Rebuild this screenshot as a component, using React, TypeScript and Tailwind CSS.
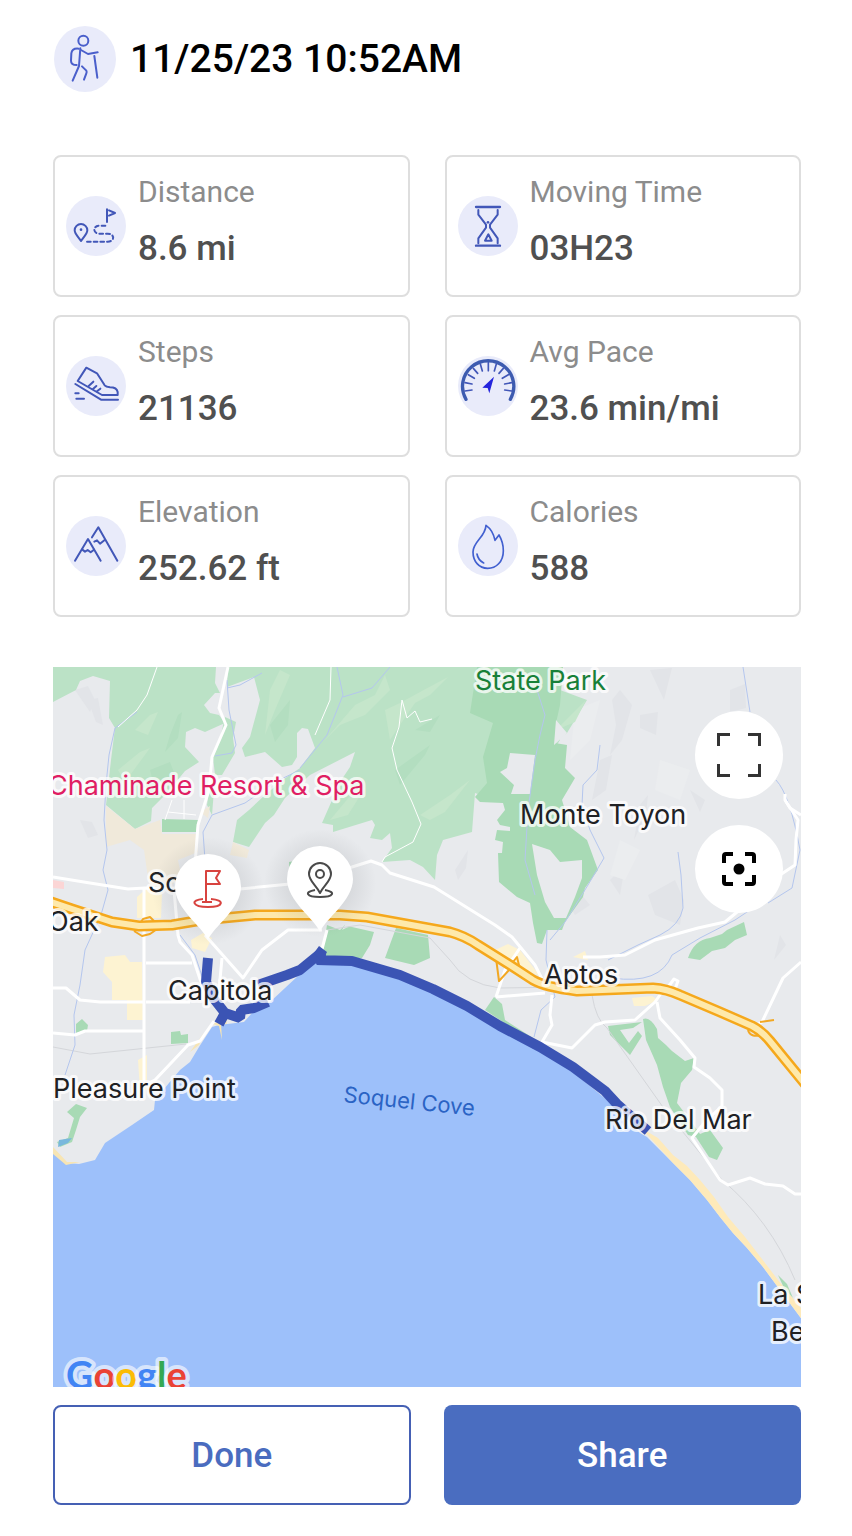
import React from 'react';

interface Stat {
  label: string;
  value: string;
  icon: React.ReactNode;
}

const iconProps = {
  viewBox: '0 0 180 180',
  fill: 'none',
  stroke: '#4257b8',
  strokeWidth: 6,
  strokeLinecap: 'round' as const,
  strokeLinejoin: 'round' as const,
  className: 'w-full h-full',
  'aria-hidden': true,
};

function HikerIcon() {
  return (
    <svg {...iconProps} viewBox="0 0 186 198" stroke="#4a5fcb">
      <circle cx="88" cy="44" r="15" />
      <path d="M74 68Q54 66 52 82L51 104Q51 117 68 117" />
      <path d="M79 67L75 120L56 164" />
      <path d="M81 72L102 84L131 79" />
      <path d="M121 90L130 155" />
      <path d="M84 121L97 134Q99 138 97 142L90 161" />
    </svg>
  );
}

function RouteIcon() {
  return (
    <svg {...iconProps}>
      <path d="M45 135C38 124 26 114 26 103A19 19 0 0 1 64 103C64 114 52 124 45 135Z" />
      <circle cx="45" cy="101" r="4" fill="#4257b8" stroke="none" />
      <path d="M123 40V78M129 43L147 51L129 59" />
      <path d="M118 89H100C80 89 80 113 100 113H125C147 113 147 137 125 137H57" strokeDasharray="11 9" />
    </svg>
  );
}

function HourglassIcon() {
  return (
    <svg {...iconProps}>
      <path d="M54 33H126M54 149H126" strokeWidth="7" />
      <path d="M61 42V56L84 86V95L61 127V142" />
      <path d="M119 42V56L96 86V95L119 127V142" />
      <circle cx="90" cy="79" r="4" fill="#4257b8" stroke="none" />
      <path d="M91 115L81 134H101Z" />
    </svg>
  );
}

function ShoeIcon() {
  return (
    <svg {...iconProps}>
      <path d="M61 35L93 52L116 88Q120 93 132 94Q152 94 155 108V117H108L35 75Z" />
      <path d="M28 84L105 131H156" />
      <path d="M68 90L82 77M81 99L91 90M93 106L103 98" />
      <path d="M28 112H38M31 128H54" />
    </svg>
  );
}

function GaugeIcon() {
  return (
    <svg {...iconProps}>
      <path d="M24 130A77 77 0 1 1 157 130" strokeWidth="10" stroke="#3d5bb0" />
      <path
        strokeWidth="5"
        d="M21 105L42 102M21 80L42 84M31 56L49 67M46 37L59 52M67 24L73 45M91 20V44M115 24L109 45M136 37L123 52M151 56L133 67M161 80L140 84M161 105L140 102"
      />
      <path d="M108 62L73 95L89 96L94 112Z" fill="#2424dd" stroke="none" />
    </svg>
  );
}

function MountainIcon() {
  return (
    <svg {...iconProps}>
      <path d="M78 64L97 34L154 134" />
      <path d="M85 77L93 73L102 83L116 72" />
      <path d="M27 134L66 69L104 134" />
      <path d="M49 101L57 107L65 102L74 109L84 101" />
    </svg>
  );
}

function FlameIcon() {
  return (
    <svg {...iconProps} stroke="#4260d0" strokeWidth="5">
      <path d="M84 28C97 37 107 53 111 73L123 57C132 72 136 88 136 104C136 138 114 157 89 157C63 157 45 136 45 108C45 76 82 64 84 28Z" />
      <path d="M57 114Q60 132 77 141" />
    </svg>
  );
}

const stats: Stat[] = [
  { label: 'Distance', value: '8.6 mi', icon: <RouteIcon /> },
  { label: 'Moving Time', value: '03H23', icon: <HourglassIcon /> },
  { label: 'Steps', value: '21136', icon: <ShoeIcon /> },
  { label: 'Avg Pace', value: '23.6 min/mi', icon: <GaugeIcon /> },
  { label: 'Elevation', value: '252.62 ft', icon: <MountainIcon /> },
  { label: 'Calories', value: '588', icon: <FlameIcon /> },
];

function StatCard({ label, value, icon }: Stat) {
  return (
    <div className="flex items-center gap-3 rounded-lg border-2 border-[#dedede] py-1.5 pl-[11px]">
      <div className="h-[60px] w-[60px] shrink-0 rounded-full bg-[#e9ebfa]">{icon}</div>
      <dl className="pb-3 leading-[57px] whitespace-nowrap">
        <dt className="text-[30px] text-[#8c8c8c]">{label}</dt>
        <dd className="text-[35px] font-medium text-[#505050]">{value}</dd>
      </dl>
    </div>
  );
}

const HIGHWAY =
  'M45 900L72 909L112 922L139 926L172 925L202 920L255 915H340L367 917L450 932Q465 936 478 945L510 965L533 980Q545 987 577 991L653 988Q667 989 680 995L720 1012L752 1026Q762 1031 770 1041L806 1085';

const COAST =
  'L67 1163L79 1164L95 1160L105 1143L132 1125L154 1110L155 1100L169 1083L180 1070L190 1062L199 1047L212 1027L219 1025L244 1022L252 1013L269 1003L285 988L299 975L315 963L352 965L400 977L467 1006L533 1045L573 1072L607 1100L640 1133L647 1137L673 1163L690 1180L707 1200L720 1217L733 1233L747 1248L763 1267L780 1290L806 1325';

const labels = [
  { text: 'State Park', x: 475, y: 690, color: '#188038' },
  { text: 'Chaminade Resort & Spa', x: 48, y: 795, color: '#e01e63' },
  { text: 'Monte Toyon', x: 520, y: 824, color: '#202124' },
  { text: 'Soquel', x: 148, y: 892, color: '#202124' },
  { text: 'Oak', x: 48, y: 931, color: '#202124' },
  { text: 'Aptos', x: 544, y: 984, color: '#202124' },
  { text: 'Capitola', x: 168, y: 1000, color: '#202124' },
  { text: 'Pleasure Point', x: 53, y: 1098, color: '#202124' },
  { text: 'Rio Del Mar', x: 605, y: 1129, color: '#202124' },
  { text: 'La Selva', x: 758, y: 1304, color: '#202124' },
  { text: 'Beach', x: 771, y: 1341, color: '#202124' },
];

function Pin({ x, y, children }: { x: number; y: number; children: React.ReactNode }) {
  return (
    <g transform={`translate(${x} ${y})`}>
      <ellipse cx="0" cy="4" rx="56" ry="54" fill="url(#pinShade)" />
      <path d="M0 53C-5 40-33 22-33 0A33 33 0 1 1 33 0C33 22 5 40 0 53Z" fill="#fff" />
      <g fill="none" strokeWidth="2" strokeLinejoin="round">{children}</g>
    </g>
  );
}

function RouteMap() {
  return (
    <svg viewBox="53 667 748 720" className="block h-auto w-full" role="img" aria-label="Map of the route">
      <defs>
        <radialGradient id="pinShade">
          <stop offset="0.4" stopColor="#5f6368" stopOpacity="0.16" />
          <stop offset="1" stopColor="#5f6368" stopOpacity="0" />
        </radialGradient>
      </defs>
      <rect x="53" y="667" width="748" height="720" fill="#e8eaed" />

      {/* terrain shading */}
      <g fill="#e2e4e8">
        <path d="M75 690L88 686L95 700L90 712ZM88 700L98 698L103 725L96 722ZM80 820L92 822L98 835L88 838Z" />
        <path d="M612 700L620 690L632 705L622 740L610 755L616 725ZM640 715L658 712L656 735L640 728ZM600 760L612 755L606 790L592 800ZM640 805L648 795L646 815L634 840Z" />
        <path d="M648 895L675 880L684 900L680 925L655 915ZM730 690L745 684L746 708L730 712ZM455 870L468 850L466 868L458 880ZM690 790L705 800L700 812Z" />
        <path d="M566 900L580 893L590 905L575 915ZM610 880L625 865L620 895ZM650 670L672 668L664 700ZM774 960L780 935L786 945Z" />
      </g>
      <g fill="#ebedef">
        <path d="M575 710L600 700L590 740L570 760ZM620 840L640 850L625 880L610 875ZM660 760L690 770L680 800L655 790Z" />
      </g>

      {/* forests */}
      <g fill="#bbe2c6">
        <path d="M53 667V702L76 690L80 681L93 676L110 681L109 718L115 728L111 760L106 805L135 829L151 821L152 808L167 793L185 771L199 762L185 747L186 732L195 728L205 732L225 723L219 715L210 713L204 705L215 693L220 693L215 683L216 667Z" />
        <path d="M225 717L236 722L233 738L235 753L222 775L215 775L213 757L219 743ZM209 790L214 790L212 815L207 805Z" />
        <path d="M228 667L227 687L254 677L260 700L250 737L242 748L245 757L265 752L282 767L292 765L297 757V733L302 728L308 729L315 748L300 768L284 779L265 795L249 810L237 820L233 842L249 847L265 823L274 815L285 798L310 775L355 752L350 767L340 782L322 823L333 825V832L372 820L375 825L370 838L382 840L390 833L392 848L382 862L410 860L423 867L435 880L437 855L443 840L472 832L475 793L503 803L530 790L560 740V667Z" />
        <path d="M560 690L587 700L567 733L550 745Z" />
      </g>
      <g fill="#a8dab5">
        <path d="M477 667L470 713L493 723L483 757L487 783L475 797L480 802L503 803L505 810L497 820L500 825L510 827V831L497 830L495 840L503 842L502 853L498 853L499 882L517 897L530 903L533 923L537 943L542 944L547 930L562 930L565 922L583 897L585 888L598 870L587 840L570 827L562 800L575 778L565 768L567 745L555 743L556 723L560 705L563 667Z" />
        <path d="M162 819L198 820L196 832L162 832ZM289 862L295 861V885L290 882Z" />
        <path d="M327 925L340 930L345 925L352 927L374 932L370 945L362 958L352 960L322 956ZM396 928L428 935L430 958L414 965L385 958Z" />
        <path d="M688 958Q694 940 710 938L722 934L727 930L744 922L747 935L735 940L725 948L712 951L700 960Z" />
        <path d="M485 1010L494 997L502 1004L505 1020L533 1038L530 1040Z" />
        <path d="M608 1026L642 1022L633 1028L620 1030L629 1043L638 1031L642 1036L630 1055L610 1035Z" />
        <path d="M643 1019Q650 1016 657 1029L658 1038L666 1045L672 1051L685 1061L694 1058L692 1070L681 1083L677 1103L690 1120L700 1134L710 1130L723 1148L717 1160L709 1157L696 1137L688 1135L670 1107L663 1087L657 1065L646 1040Z" />
        <path d="M76 1024L82 1019L88 1025L87 1031L76 1033ZM171 1032L180 1031L181 1035L188 1034V1043L171 1044Z" />
        <path d="M67 1112L76 1104L87 1108L80 1117L76 1130L72 1142L60 1147L57 1142L68 1138L74 1118Z" />
      </g>
      <g fill="#c5e6cb">
        <path d="M385 710L400 703L420 692L448 677L430 695L415 703L400 725L390 740ZM355 705L375 695L385 675L390 690L365 715L340 725L325 740ZM420 815L450 795L470 780L445 812L430 820ZM330 820L355 790L365 788L348 815Z" />
        <path d="M270 690L280 670L290 675L275 710L265 735ZM118 770L140 752L150 748L125 782ZM135 730L150 715L158 712L148 735ZM556 730L586 700L575 722Z" />
      </g>
      <g fill="#b3deC0">
        <path d="M170 735L178 715L182 712L178 738L165 752ZM150 770L170 762L175 775L155 790ZM270 725L290 700L288 725L275 742ZM395 770L430 745L425 755L400 785ZM415 730L440 715L430 732Z" />
      </g>
      <g fill="#e8eaed">
        <path d="M510 753L535 755L530 794H511L514 785L500 772L507 768ZM532 844L550 850L560 862L582 860V878L575 897L566 918H554L545 902L537 875Z" />
        <path d="M556 720L567 733L554 745ZM352 925H345L342 930Z" />
      </g>

      {/* built-up areas */}
      <g fill="#f0e9da">
        <path d="M106 806L135 829L160 820L162 834H196L198 852L178 860L182 880L150 892L144 850L130 840L106 847ZM200 812L210 806L208 818ZM233 842L249 850L247 858L230 855Z" />
      </g>
      <g fill="#fdf3d2">
        <path d="M137 897L147 888L162 892L161 918H137ZM105 957L125 955L130 962L142 962L143 1020L127 1020V1000H112V982L103 972ZM191 940L203 933L212 938L205 952L192 948ZM138 1060L147 1055V1090H140ZM495 950L508 944L520 950L540 976L525 970L498 960ZM573 957L585 951L588 960ZM632 998L652 996L658 1000L645 1006H634Z" />
      </g>
      <path d="M53 880L64 882V889L53 888Z" fill="#fbd5d5" />

      {/* rail lines */}
      <g fill="none" stroke="#d4d6da" strokeWidth="1">
        <path d="M53 1047L90 1054L186 1044M327 930L360 925L430 938L450 960Q465 984 500 988L570 987M592 995Q596 1020 607 1028L665 1110L722 1180Q770 1220 795 1280" />
      </g>

      {/* streams */}
      <g fill="none" stroke="#b4c6ee" strokeWidth="1">
        <path d="M137 712L115 728L109 755L106 785L104 820L107 850L103 870L108 890L101 915L85 950L80 985L74 1015L75 1045L65 1075" />
        <path d="M227 680L229 710L236 745L232 753L215 756M262 673L240 685L227 688M337 667L343 695L327 735L300 768M390 667L372 688L343 697M300 770L275 782L245 803L212 815L203 832L205 860" />
        <path d="M743 667L750 712M776 780Q790 795 800 850L792 888L768 903M600 745L597 770L583 785L582 805L590 830L604 858L588 885L565 922L550 940M678 852L681 875L683 908Q680 925 660 935L638 945L608 960M534 1037L541 1010L555 997L546 960L547 930M612 978Q660 985 672 955L700 938L735 920L750 910" />
        <path d="M180 935L195 955L205 985M537 690L545 715L540 735L535 760L528 810L525 860L535 895" />
      </g>

      <path d={`M53 1150${COAST}V1387H53Z`} fill="#9dc0fa" />
      <path
        d="M641 1128L658 1138L673 1155L687 1166L700 1180L714 1197L728 1217L745 1237L762 1259L778 1280L806 1314V1325L780 1290L763 1267L747 1248L733 1233L720 1217L707 1200L690 1180L673 1163Z"
        fill="#feeaba"
      />
      <path d="M53 1147L67 1162H80L66 1165L53 1154ZM213 1024L226 1018L227 1024L221 1023L222 1040L219 1026ZM190 1052L204 1033L199 1045Z" fill="#f7e5b4" />
      <path d="M59 1140L72 1138L68 1143L58 1147Z" fill="#79b8dd" />
      <path d="M778 1275L787 1284L793 1298L784 1288Z" fill="#a8dab5" />

      {/* streets */}
      <g fill="none" stroke="#fff" strokeLinejoin="round">
        <path strokeWidth="3" d="M228 667L219 708L226 725L212 757L209 790L198 825L195 865L190 890" />
        <path strokeWidth="3" d="M53 877L90 883L128 889L145 888L240 889L290 884L352 867L371 861L382 865L390 873L434 887L495 925L512 937L535 965L545 985" />
        <path strokeWidth="3" d="M144 888V1085L155 1080L188 1045L200 1041L214 1021M174 890L178 935L180 942L192 955L202 985L206 1000M205 935L243 978L262 950L288 930H322M146 963H192M146 1002H190M53 988H66L80 1000L100 1002H143M53 1033L75 1035L85 1031H143M222 958L219 990M327 930L321 953" />
        <path strokeWidth="3" d="M496 997L505 970L520 948M496 997L545 993M552 995L550 1015L552 1025L542 1042L572 1048L595 1025L605 1022L635 1020L655 1002L662 992M657 1002L660 1018L680 1040L695 1058L694 1067L710 1078L722 1090V1106L705 1122L692 1138L720 1180L728 1185L750 1178L765 1184L783 1186L795 1194H801M583 957L600 957L625 955L655 940L680 933L698 928L725 922L742 908L765 885L795 865L796 840L798 820L785 800V794" />
        <path strokeWidth="3" d="M801 962L783 978L762 1022L755 1026M666 990L674 979L678 981L674 992M785 800L790 808L801 815" />
        <path strokeWidth="1" d="M157 667L147 695L137 710L118 727M331 667L330 700L315 735M402 700L399 727L392 748L397 770L412 802L421 824L413 842L385 857L382 862M402 700L407 718L415 711L420 722L432 719M168 812L196 815M172 800L165 820M184 800V819" />
      </g>

      {/* highway */}
      <g fill="none" strokeLinejoin="round">
        <path
          d="M134 931L142 936L150 934L160 927L150 917L143 919L138 926M496 958L499 981L511 968M513 962L517 957L522 978M748 1030Q750 1038 762 1035M760 1022L774 1020"
          stroke="#f2a824"
          strokeWidth="2"
        />
        <path d={HIGHWAY} stroke="#f5a81c" strokeWidth="11" />
        <path d={HIGHWAY} stroke="#fee9ab" strokeWidth="6" />
      </g>

      {/* walked track */}
      <path
        d="M208 958L206 982L214 999L225 1013L219 1024M222 1012L240 1018L241 1010L254 1008L268 1002M258 985L287 975L300 970L322 952L317 960L352 961L400 975L433 989L467 1006L500 1026L540 1047L573 1067L605 1091L617 1104L648 1131"
        fill="none"
        stroke="#3b54b4"
        strokeWidth="10"
        strokeLinejoin="bevel"
      />
      <path d="M314 953L319 946L327 952L322 962ZM603 1085L611 1092L613 1104L604 1096Z" fill="#3b54b4" />

      {/* place names */}
      <g
        fontFamily="Inter, 'Liberation Sans', sans-serif"
        fontSize="27"
        stroke="#fff"
        strokeOpacity="0.75"
        strokeWidth="6"
        strokeLinejoin="round"
        paintOrder="stroke"
      >
        {labels.map(({ text, x, y, color }) => (
          <text key={text} x={x} y={y} fill={color}>
            {text}
          </text>
        ))}
      </g>
      <text
        transform="translate(343 1102) rotate(6)"
        fontFamily="Inter, 'Liberation Sans', sans-serif"
        fontSize="22"
        fill="#2a63c4"
      >
        Soquel Cove
      </text>

      <Pin x={208} y={887}>
        <g stroke="#d8433f">
          <path d="M-2 15V-16H12L8 -9L12 -3H-2" />
          <path d="M-5 12C-18 13-16 20 0 20S17 13 3 12" />
          <path d="M-6 15H4" />
        </g>
      </Pin>
      <Pin x={320} y={879}>
        <g stroke="#4a4a4a">
          <path d="M0 14C-4 6-11 2-11-5A11 11 0 0 1 11-5C11 2 4 6 0 14Z" />
          <circle cy="-5" r="4" />
          <path d="M-5 11C-16 13-14 18 0 18S16 13 5 11" />
        </g>
      </Pin>

      <text
        x="66"
        y="1389"
        fontFamily="Lato, sans-serif"
        fontSize="38"
        fontWeight="700"
        stroke="#fff"
        strokeOpacity="0.6"
        strokeWidth="8"
        strokeLinejoin="round"
        paintOrder="stroke"
      >
        <tspan fill="#4285f4">G</tspan>
        <tspan fill="#ea4335">o</tspan>
        <tspan fill="#fbbc05">o</tspan>
        <tspan fill="#4285f4">g</tspan>
        <tspan fill="#34a853">l</tspan>
        <tspan fill="#ea4335">e</tspan>
      </text>
    </svg>
  );
}

export default function App() {
  return (
    <main className="bg-white pt-[26px] pr-[51px] pb-8 pl-[53px] font-['Roboto','Liberation_Sans',sans-serif]">
      <header className="flex items-center gap-3.5">
        <div className="ml-px h-[66px] w-[62px] shrink-0 rounded-[50%] bg-[#e9ebfa]">
          <HikerIcon />
        </div>
        <h1 className="text-[39px] leading-[66px] font-medium text-black">11/25/23 10:52AM</h1>
      </header>

      <section className="mt-[63px] grid grid-cols-2 gap-x-[35px] gap-y-[18px]">
        {stats.map(stat => (
          <StatCard key={stat.label} {...stat} />
        ))}
      </section>

      <section className="relative mt-[50px] overflow-hidden">
        <RouteMap />
        <div className="absolute top-11 right-[18px] flex flex-col gap-[26px]">
          <button
            type="button"
            aria-label="Full screen"
            className="flex h-[88px] w-[88px] items-center justify-center rounded-full bg-white"
          >
            <svg viewBox="0 0 44 44" className="h-11 w-11" fill="none" stroke="#333" strokeWidth="3">
              <path d="M1.5 13V1.5H13M31 1.5H42.5V13M42.5 31V42.5H31M13 42.5H1.5V31" />
            </svg>
          </button>
          <button
            type="button"
            aria-label="Center on route"
            className="flex h-[88px] w-[88px] items-center justify-center rounded-full bg-white"
          >
            <svg viewBox="0 0 34 34" className="h-[34px] w-[34px]" fill="none" stroke="#000" strokeWidth="4">
              <path d="M2 11V4Q2 2 4 2H11M23 2H30Q32 2 32 4V11M32 23V30Q32 32 30 32H23M11 32H4Q2 32 2 30V23" />
              <circle cx="17" cy="17" r="5.5" fill="#000" stroke="none" />
            </svg>
          </button>
        </div>
      </section>

      <div className="mt-[18px] grid grid-cols-2 gap-x-[33px] text-[35px] font-medium">
        <button type="button" className="h-[100px] rounded-lg border-2 border-[#4560b4] bg-white pt-0.5 text-[#4a6cbf]">
          Done
        </button>
        <button type="button" className="h-[100px] rounded-lg bg-[#4a6dc0] pt-0.5 text-white">
          Share
        </button>
      </div>
    </main>
  );
}
